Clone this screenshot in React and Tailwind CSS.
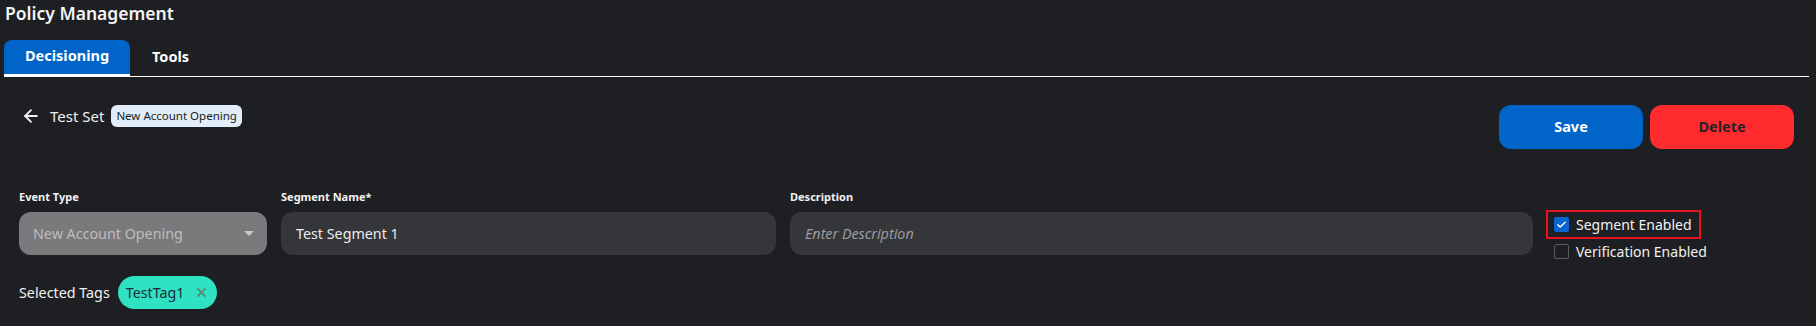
import React from "react";

function ArrowLeft() {
  return (
    <svg width="20" height="20" viewBox="0 0 24 24" fill="none" stroke="currentColor" strokeWidth="2.2" strokeLinecap="round" strokeLinejoin="round">
      <path d="M19 12H5" />
      <path d="m12 19-7-7 7-7" />
    </svg>
  );
}

function Check() {
  return (
    <svg width="11" height="11" viewBox="0 0 24 24" fill="none" stroke="white" strokeWidth="3" strokeLinecap="round" strokeLinejoin="round">
      <path d="M4 12.5l5 5L20 7" />
    </svg>
  );
}

export default function App() {
  return (
    <div
      className="w-full h-[326px] bg-[#1e1f23] text-white pl-[4px] pr-[7px] overflow-hidden"
      style={{ fontFamily: '"Noto Sans", "Open Sans", sans-serif' }}
    >
      <h1 className="text-[17.5px] font-semibold leading-[24px] pt-[1px] pl-[1px] text-[#f4f4f4]">Policy Management</h1>
      <div className="mt-[15px] flex border-b border-white">
        <div className="h-[36px] w-[126px] bg-[#0064c8] rounded-t-[8px] border-b-2 border-white flex items-center justify-center pb-[3px] text-[14.5px] font-bold">
          Decisioning
        </div>
        <div className="h-[36px] px-[22px] flex items-center justify-center pb-[3px] text-[14.5px] font-bold">Tools</div>
      </div>

      <div className="px-[15px]">
        <div className="mt-[28px] flex justify-between items-start">
          <div className="flex items-center h-[22px]">
            <span className="text-[#f0f0f0] ml-[2px]"><ArrowLeft /></span>
            <span className="ml-[9px] text-[15px] text-[#f0f0f0]">Test Set</span>
            <span className="ml-[7px] h-[22px] px-[5px] flex items-center rounded-[6px] bg-[#e1edf8] text-[#1b1d22] text-[11.5px]">
              New Account Opening
            </span>
          </div>
          <div className="flex gap-[7px]">
            <button className="w-[144px] h-[44px] rounded-[12px] bg-[#0064c8] text-white text-[14.5px] font-bold">Save</button>
            <button className="w-[144px] h-[44px] rounded-[12px] bg-[#ff2b2f] text-[#2a1f24] text-[14.5px] font-bold">Delete</button>
          </div>
        </div>

        <div className="mt-[40px] flex items-start gap-[13px]">
          <div className="flex gap-[14px]">
            <div className="w-[248px]">
              <div className="text-[11px] font-bold leading-[16px] text-[#f2f2f2]">Event Type</div>
              <div className="mt-[7px] h-[43px] rounded-[12px] bg-[#7a7a7c] flex items-center justify-between pl-[14px] pr-[13px]">
                <span className="text-[14.3px] text-[#bdbdbd]">New Account Opening</span>
                <svg width="10" height="5" viewBox="0 0 10 5"><path d="M0 0h10L5 5z" fill="#c9c9c9" /></svg>
              </div>
            </div>
            <div className="w-[495px]">
              <div className="text-[11px] font-bold leading-[16px] text-[#f2f2f2]">Segment Name*</div>
              <div className="mt-[7px] h-[43px] rounded-[12px] bg-[#353639] flex items-center pl-[15px]">
                <span className="text-[14.3px] text-[#ececec]">Test Segment 1</span>
              </div>
            </div>
            <div className="w-[743px]">
              <div className="text-[11px] font-bold leading-[16px] text-[#f2f2f2]">Description</div>
              <div className="mt-[7px] h-[43px] rounded-[12px] bg-[#353639] flex items-center pl-[15px]">
                <span className="text-[14.3px] italic text-[#9c9ca0]">Enter Description</span>
              </div>
            </div>
          </div>
          <div className="mt-[21px] flex flex-col">
            <div className="h-[29px] border-2 border-[#e3141e] flex items-center pl-[6px] pr-[7px] w-fit">
              <span className="w-[15px] h-[15px] rounded-[2px] bg-[#0a64cf] flex items-center justify-center"><Check /></span>
              <span className="ml-[7px] text-[14px] text-[#f2f2f2]">Segment Enabled</span>
            </div>
            <div className="mt-[3px] flex items-center pl-[8px] h-[18px]">
              <span className="w-[15px] h-[15px] rounded-[2px] border border-[#5b5c60] bg-[#1e1f23]"></span>
              <span className="ml-[7px] text-[14px] text-[#f2f2f2]">Verification Enabled</span>
            </div>
          </div>
        </div>

        <div className="mt-[16px] flex items-center">
          <span className="text-[14.3px] text-[#f2f2f2]">Selected Tags</span>
          <span className="ml-[8px] h-[33px] pl-[8px] pr-[11px] rounded-full bg-[#2ee2c2] flex items-center">
            <span className="text-[14.3px] text-[#1d2a3a]">TestTag1</span>
            <svg className="ml-[12px]" width="9" height="9" viewBox="0 0 10 10" stroke="#5f7f79" strokeWidth="1.8" strokeLinecap="round">
              <path d="M1 1l8 8M9 1l-8 8" />
            </svg>
          </span>
        </div>
      </div>
    </div>
  );
}
